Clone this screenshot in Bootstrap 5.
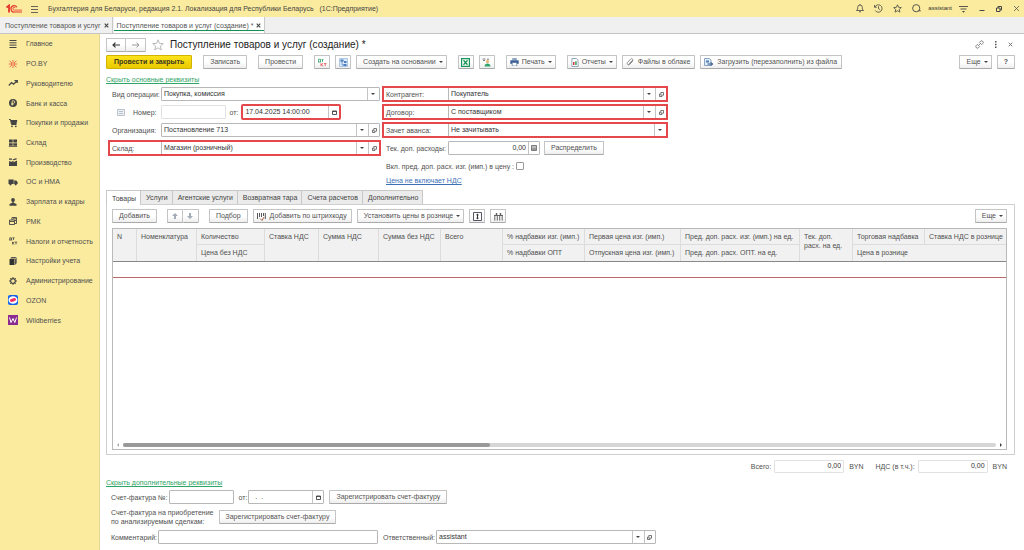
<!DOCTYPE html>
<html lang="ru">
<head>
<meta charset="utf-8">
<meta name="viewport" content="width=device-width, initial-scale=1">
<title>Поступление товаров и услуг (создание)</title>
<link href="https://cdn.jsdelivr.net/npm/bootstrap@5.3.0/dist/css/bootstrap.min.css" rel="stylesheet">
<style>
body{font:7px/9px "Liberation Sans",Arial,sans-serif;color:#505050;background:#fff}
svg{display:block;flex:none}
a{color:#2fa567}
.app-top{height:17px;background:#fbeb9e;padding:0 4px 0 6px;color:#444}
.app-top button,.page-head .tool,.open-tab button{border:0;background:none;padding:0;color:#555;line-height:1}
.app-name{margin-left:10px}
.top-tools,.win-tools{gap:10px}
.win-tools{gap:11px;margin-left:7px}
.user-name{font-size:6px;color:#333;margin-left:-3px}
.tab-strip{height:17px;background:#f0f0f0;border-bottom:1px solid #c4c4c4}
.open-tab{padding:0 3px 0 5px;gap:3px;border-right:1px solid #c8c8c8}
.open-tab a{color:#555;text-decoration:none}
.open-tab.current{background:#fff;margin-left:1px;padding:0 3px;box-shadow:inset 0 -2px 0 #fff,inset 0 -3px 0 #149050}
.side{flex:0 0 100px;background:#fbeb9e;border-right:1px solid #e2d794}
.side ul{display:grid;grid-auto-rows:1fr;height:296px;margin:0;padding:0;list-style:none}
.side a{display:flex;align-items:center;gap:8px;height:100%;padding-left:8px;color:#505050;text-decoration:none}
.page-body{padding:0 9px 4px 6px}
.page-head{height:21px;gap:6px}
.page-head h1{font-size:10px;line-height:12px;margin:0;font-weight:400;color:#222}
.head-tools{gap:7px;padding-right:2px}
.tbtn{display:inline-flex;align-items:center;justify-content:center;gap:4px;height:14px;padding:0 6px;border:1px solid #c4c4c4;border-bottom-color:#aaa;border-radius:1px;background:linear-gradient(#fff 50%,#eee);color:#505050;font-size:7px;line-height:8px;white-space:nowrap}
.tbtn.go{padding:0 7px;background:linear-gradient(#fde31b,#eac900);border-color:#d0b400;color:#3d3820;font-weight:700}
.tbtn.sq{width:16px;padding:0}
.tbtn.arrow{width:20px;padding:0}
.tbtn.ico{padding:0 4px 0 3px}
.tbtn.menu{padding-right:3px;gap:3px}
.tbtn.menu::after{content:"";border:2px solid transparent;border-top-color:#444;border-bottom:0}
.tools{gap:11px}.pair{display:flex;gap:5px}
.sheet .tools{gap:10px}
.joined{display:flex}.joined .tbtn+.tbtn{border-left:0}
.more-link{display:block;width:max-content;line-height:11px}
.more-link.top{margin-top:5px}
.more-link.price{color:#3b6fb6;margin-left:3px}
.head-form{gap:3px;padding-left:3px}
.col-left{flex:0 1 271px}.col-right{flex:0 1 284px}
.frow{display:flex;align-items:center;height:18px}
.frow>.bar{display:flex;align-items:center;flex:1;height:14px}
.lab{flex:none;white-space:nowrap}
.col-left .lab.w{width:52px;padding-left:3px}
.col-right .lab.w{width:65px;padding-left:3px}
.lab.in{padding-left:3px}
.fld{display:flex;flex:1 1 auto;min-width:0;height:14px;border:1px solid #b8b8b8;border-radius:1px;background:#fff}
.fld.pale{border-color:#e2e2e2}
.fld.w-num{flex:0 1 65px}
.fld.w-day{flex:0 1 76px}
.fld.w-time{flex:0 1 98px}
.fld.w-sum{flex:0 1 92px}
.fld.w-note{flex:0 1 220px}
.fld input,.fld select{flex:1 1 0;min-width:0;width:0;height:12px;border:0;border-radius:0;padding:0 2px;background:transparent;color:#333;font-size:7px;line-height:12px;outline:0}
.fld select{appearance:none;background:url("data:image/svg+xml,%3Csvg xmlns='http://www.w3.org/2000/svg' viewBox='0 0 4 2'%3E%3Cpath d='M0 0h4L2 2z' fill='%23444'/%3E%3C/svg%3E") right 4px center/4px 2px no-repeat,linear-gradient(#c4c4c4,#c4c4c4) right 11px top/1px 12px no-repeat}
.fld button{display:flex;align-items:center;justify-content:center;width:11px;padding:0;border:0;border-left:1px solid #c4c4c4;background:none;color:#444}
.marked{outline:2px solid #e5484a;outline-offset:-1px}
.tick{appearance:none;width:8px;height:8px;margin:0 0 0 2px;border:1px solid #999;border-radius:1px;background:#fff}
.sheet-tabs{gap:0;border:0}
.sheet-tabs button{height:14px;padding:0 4px 0 5px;border:1px solid #c8c8c8;border-bottom:0;border-left:0;border-radius:0;background:#ebebeb;color:#444;font-size:7px;line-height:13px;white-space:nowrap}
.sheet-tabs li:first-child button{height:15px;margin-bottom:-1px;border-left:1px solid #c8c8c8;background:#fff;position:relative}
.sheet{border:1px solid #cfcfcf;padding:4px 7px 4px 5px}
.grid-box{border:1px solid #b9b9b9;margin-top:5px}
.goods{width:100%;table-layout:fixed;border-collapse:separate;border-spacing:0}
.goods th{height:16px;padding:3px 3px 0 4px;font-weight:400;line-height:9px;vertical-align:top;background:#f1f1f1;border:0 solid #dcdcdc;border-right-width:1px;white-space:nowrap;overflow:hidden}
.goods th:last-child{border-right:0}
.goods thead tr:first-child th:not([rowspan]){border-bottom-width:1px}
.goods td{height:17px;padding:0;border-top:1px solid #888;border-bottom:1px solid #b9696a}
.hscroll{height:8px;gap:4px;padding:0 4px}
.hscroll i{border:2px solid transparent;width:0;height:0}
.hscroll .lt{border-right-color:#aaa;border-left:0}.hscroll .rt{border-left-color:#444;border-right:0}
.track{height:4px;border-radius:2px;background:#d6d6d6}
.thumb{width:42%;height:4px;border-radius:2px;background:#999}
.sums{height:22px;padding-right:8px;gap:5px}
.sums .lab+.fld{margin-left:-2px}
.sums .lab.next{margin-left:7px}
.sums .fld{flex:0 0 70px;height:13px}
.sums input{text-align:right;height:11px}
.extra{display:flex;flex-direction:column;gap:2px;padding-left:5px}
.extra .frow{gap:5px}
.extra .lab+.fld{margin-left:-4px}
</style>
</head>
<body>
<div class="d-flex flex-column min-vh-100">
<header class="app-top d-flex align-items-center">
  <svg width="17" height="10" viewBox="0 0 17 10" fill="none" stroke="#e3362c"><path d="M0.500 3.500 3 1.500V8.500" stroke-width="1.800"/><path d="M10.900 3.200A3.200 3.200 0 1 0 8.500 8H16" stroke-width="1.200"/><path d="M9.600 4.200A1.400 1.400 0 1 0 8.500 6.100H16" stroke-width=".8"/></svg>
  <button type="button" class="ms-2" aria-label="Меню"><svg width="7" height="8" viewBox="0 0 7 8" stroke="#555" stroke-width=".9"><path d="M0 1.500h7M0 4.500h7M0 7.500h7"/></svg></button>
  <span class="app-name">Бухгалтерия для Беларуси, редакция 2.1. Локализация для Республики Беларусь &nbsp; (1С:Предприятие)</span>
  <div class="top-tools d-flex align-items-center ms-auto">
    <button type="button" aria-label="Уведомления"><svg width="8" height="9" viewBox="0 0 8 9" fill="none" stroke="#444" stroke-width=".8"><path d="M.5 6.500h7L6.300 5V3.300a2.300 2.300 0 0 0-4.600 0V5zM4 .2v1M3 7.800h2"/></svg></button>
    <button type="button" aria-label="История"><svg width="9" height="9" viewBox="0 0 9 9" fill="none" stroke="#444" stroke-width=".8"><path d="M1 3A3.700 3.700 0 1 1 1.200 6.400M.5 1v2.300h2.200M4.500 2.300v2.400l1.700 1"/></svg></button>
    <button type="button" aria-label="Избранное"><svg width="9" height="9" viewBox="0 0 9 9" fill="none" stroke="#444" stroke-width=".8"><path d="M4.500.8l1.100 2.500 2.700.3-2 1.800.6 2.700-2.400-1.400-2.400 1.400.6-2.700-2-1.800 2.700-.3z"/></svg></button>
    <button type="button" aria-label="Поиск"><svg width="9" height="9" viewBox="0 0 9 9" fill="none" stroke="#444" stroke-width=".9"><circle cx="4.200" cy="4.200" r="3.600"/><path d="M6.600 6.800H8.800"/></svg></button>
    <span class="user-name">assistant</span>
  </div>
  <div class="win-tools d-flex align-items-center">
    <button type="button" aria-label="Настройки"><svg width="9" height="8" viewBox="0 0 9 8"><path d="M0 1.500h9M1.500 4h6" stroke="#444" stroke-width=".9"/><path d="M3 6h3L4.500 7.800z" fill="#444"/></svg></button>
    <button type="button" aria-label="Свернуть"><svg width="6" height="7" viewBox="0 0 6 7" stroke="#444"><path d="M.5 5.500h5"/></svg></button>
    <button type="button" aria-label="Восстановить"><svg width="6" height="6" viewBox="0 0 6 6" fill="none" stroke="#444"><path d="M.5 2h3.500v3.500H.500zM2 2V.5h3.500V4H4"/></svg></button>
    <button type="button" aria-label="Закрыть"><svg width="7" height="7" viewBox="0 0 7 7" stroke="#555" stroke-width=".8"><path d="M1 1l5 5M6 1 1 6"/></svg></button>
  </div>
</header>
<nav class="tab-strip d-flex" aria-label="Открытые окна">
  <div class="open-tab d-flex align-items-center"><a href="#">Поступление товаров и услуг</a><button type="button" aria-label="Закрыть вкладку"><svg width="5" height="5" viewBox="0 0 5 5" stroke="#444" stroke-width="1.100"><path d="M.7.7l3.600 3.600M4.300.7.7 4.300"/></svg></button></div>
  <div class="open-tab current d-flex align-items-center"><a href="#">Поступление товаров и услуг (создание) *</a><button type="button" aria-label="Закрыть вкладку"><svg width="5" height="5" viewBox="0 0 5 5" stroke="#444" stroke-width="1.100"><path d="M.7.7l3.600 3.600M4.300.7.7 4.300"/></svg></button></div>
</nav>
<div class="d-flex flex-grow-1">
<nav class="side" aria-label="Разделы"><ul>
  <li><a href="#"><svg width="10" height="10" viewBox="0 0 10 10" stroke="#444"><path d="M1.500 1.500h7M1.500 3.800h7M1.500 6.100h7M1.500 8.500h7"/></svg>Главное</a></li>
  <li><a href="#"><svg width="10" height="10" viewBox="0 0 10 10" fill="none" stroke="#e5503c" stroke-width=".8"><path d="M5 1v8M.8 5h2M7.200 5h2M1.500 2 3.500 3.300v3.400L1.500 8M8.500 2 6.500 3.300v3.400L8.500 8"/></svg>PO.BY</a></li>
  <li><a href="#"><svg width="10" height="10" viewBox="0 0 10 10" fill="none" stroke="#444" stroke-width="1.200"><path d="M.8 7.500 3.500 4.500l2 1.800L9 3M6.500 2.600H9.300V5"/></svg>Руководителю</a></li>
  <li><a href="#"><svg width="10" height="10" viewBox="0 0 10 10"><circle cx="5" cy="5" r="4" fill="#444"/><path d="M4.200 7.500V2.800h1.300a1.200 1.200 0 0 1 0 2.500H3.200M3.200 6.400h2.300" fill="none" stroke="#fbeb9e" stroke-width=".8"/></svg>Банк и касса</a></li>
  <li><a href="#"><svg width="10" height="10" viewBox="0 0 10 10"><path d="M1 1.500h1.500L3.500 6.500h5" fill="none" stroke="#444"/><path d="M2.500 2h6.800L8.500 6h-5z" fill="#444"/><circle cx="4" cy="8.300" r=".9" fill="#444"/><circle cx="7.800" cy="8.300" r=".9" fill="#444"/></svg>Покупки и продажи</a></li>
  <li><a href="#"><svg width="10" height="10" viewBox="0 0 10 10" fill="#444"><path d="M1 1.500h3.700v3H1zM5.300 1.500H9v3H5.300zM1 5.200h3.700v2.500H1zM5.300 5.200H9v2.500H5.300zM.8 8.200h8.400v.8H.8z"/></svg>Склад</a></li>
  <li><a href="#"><svg width="10" height="10" viewBox="0 0 10 10" fill="#444"><path d="M1 9V4.500l1.500-.8v1.500L5.500 3.700v1.500L9 3.500V9zM1 1.500h3v1.200H1zM4.500 2.500 8.500 1v1.500L5.500 3.300z"/></svg>Производство</a></li>
  <li><a href="#"><svg width="10" height="10" viewBox="0 0 10 10" fill="#444"><path d="M.5 2.500h5.200V7H.5zM6.200 3.500h2L9.600 5v2H6.200z"/><circle cx="2.500" cy="7.300" r="1.100"/><circle cx="7.700" cy="7.300" r="1.100"/></svg>ОС и НМА</a></li>
  <li><a href="#"><svg width="10" height="10" viewBox="0 0 10 10" fill="#444"><circle cx="5" cy="3" r="1.900"/><path d="M4.300 4.500h1.400v1.200L8.500 7v1.800h-7V7l2.800-1.300z"/></svg>Зарплата и кадры</a></li>
  <li><a href="#"><svg width="10" height="10" viewBox="0 0 10 10" fill="none" stroke="#444"><path d="M1.500 4h5v4.500h-5zM2 5.500h4M4 4V1.500h4.500v6H6.500M5 2.800h3M8 4.500H7" stroke-width=".9"/></svg>РМК</a></li>
  <li><a href="#"><svg width="10" height="10" viewBox="0 0 10 10" fill="none" stroke="#444" stroke-width=".8"><path d="M1 4h3.200M1.800 4V1.800h1.700V4M4.500 1.800h2M5.500 1.800V4M4.500 5.800v2.600M6.300 5.800 4.700 7.200 6.300 8.400M6.800 6.200h2.400M8 6.200v2.200"/></svg>Налоги и отчетность</a></li>
  <li><a href="#"><svg width="10" height="10" viewBox="0 0 10 10"><path d="M1.500 3h5v6h-5z" fill="#333"/><path d="M2 2.500 3.500 1H8.500L7 2.500zM7 3.200 8.700 1.600V7.300L7 8.900z" fill="#555"/></svg>Настройки учета</a></li>
  <li><a href="#"><svg width="10" height="10" viewBox="0 0 10 10" fill="none" stroke="#444"><circle cx="5" cy="5" r="2.300" stroke-width="1.200"/><path d="M5 1v1.500M5 7.500V9M1 5h1.500M7.500 5H9M2.200 2.200l1 1M6.800 6.800l1 1M7.800 2.200l-1 1M3.200 6.800l-1 1"/></svg>Администрирование</a></li>
  <li><a href="#"><svg width="10" height="10" viewBox="0 0 10 10"><rect width="10" height="10" rx="2" fill="#1261e8"/><ellipse cx="5" cy="5" rx="4.500" ry="3.800" fill="#fff"/><ellipse cx="5" cy="5" rx="3.100" ry="1.700" transform="rotate(-18 5 5)" fill="#f32f63"/></svg>OZON</a></li>
  <li><a href="#"><svg width="10" height="10" viewBox="0 0 10 10"><rect width="10" height="10" fill="#8b2b91"/><path d="M1.500 2.500 3 7.500l2-4 1.800 4L8.500 2.500" fill="none" stroke="#fff"/></svg>Wildberries</a></li>
</ul></nav>

<main class="page-body d-flex flex-column flex-grow-1 overflow-hidden">
  <div class="page-head d-flex align-items-center">
    <div class="joined"><button type="button" class="tbtn arrow" aria-label="Назад"><svg width="8" height="6" viewBox="0 0 8 6" fill="none" stroke="#333" stroke-width="1.200"><path d="M8 3H1M3.500.6 1 3l2.500 2.400"/></svg></button><button type="button" class="tbtn arrow" aria-label="Вперед"><svg width="8" height="6" viewBox="0 0 8 6" fill="none" stroke="#999"><path d="M0 3h7M4.500.6 7 3 4.500 5.400"/></svg></button></div>
    <button type="button" class="tool" aria-label="В избранное"><svg width="12" height="12" viewBox="0 0 12 12" fill="none" stroke="#aaa" stroke-width=".8"><path d="M6 .8l1.400 3.600 3.900.2-3 2.500 1 3.800L6 8.800 2.700 10.900l1-3.800-3-2.500 3.900-.2z"/></svg></button>
    <h1>Поступление товаров и услуг (создание) *</h1>
    <div class="head-tools d-flex align-items-center ms-auto">
      <button type="button" class="tool" aria-label="Ссылка"><svg width="9" height="9" viewBox="0 0 9 9" fill="none" stroke="#666" stroke-width=".8"><path d="M3 6 6 3M4 2.800 5.500 1.300a1.500 1.500 0 0 1 2.200 2.200L6.200 5M5 6.200 3.500 7.700A1.500 1.500 0 0 1 1.300 5.500L2.800 4"/></svg></button>
      <button type="button" class="tool px-1" aria-label="Действия"><svg width="2" height="7" viewBox="0 0 2 7" fill="#555"><path d="M0 0h1.500v1.500H0zM0 2.700h1.500v1.500H0zM0 5.400h1.500V7H0z"/></svg></button>
      <button type="button" class="tool" aria-label="Закрыть"><svg width="5" height="5" viewBox="0 0 5 5" stroke="#666" stroke-width=".9"><path d="M.7.7l3.600 3.600M4.300.7.7 4.300"/></svg></button>
    </div>
  </div>
  <div class="tools d-flex align-items-center">
    <button type="button" class="tbtn go">Провести и закрыть</button>
    <button type="button" class="tbtn">Записать</button>
    <button type="button" class="tbtn">Провести</button>
    <div class="pair">
      <button type="button" class="tbtn sq" aria-label="Дт Кт"><svg width="10" height="9" viewBox="0 0 10 9" fill="none" stroke-width=".8"><path d="M1 4h3M1.500 4V1.200h2V4M4.500 1.600h2M5.500 1.600V4" stroke="#2fa06a"/><path d="M4 5.200v3M6.200 5.200 4.200 6.700l2 1.500M7 5.600h2.500M8.200 5.600v2.600" stroke="#e04b4b"/></svg></button>
      <button type="button" class="tbtn sq" aria-label="Структура"><svg width="9" height="9" viewBox="0 0 9 9"><path d="M.5.5h8v8h-8z" fill="#dce9f7" stroke="#9bbbe0" stroke-width=".8"/><path d="M1.500 1.500h3v2.200h-3zM5 3h2.500v2H5zM4.500 6h3v2h-3z" fill="#4b7fc0"/><path d="M3 4v3h2" fill="none" stroke="#4b7fc0" stroke-width=".7"/></svg></button>
      <button type="button" class="tbtn menu">Создать на основании</button>
    </div>
    <div class="pair">
      <button type="button" class="tbtn sq" aria-label="Excel"><svg width="9" height="9" viewBox="0 0 9 9"><path d="M.6.6h7.800v7.800H.600z" fill="#fff" stroke="#179456" stroke-width="1.200"/><path d="M2.500 2.200l4 4.600M6.500 2.200l-4 4.600" stroke="#179456" stroke-width="1.300"/></svg></button>
      <button type="button" class="tbtn sq" aria-label="Контрагент"><svg width="9" height="9" viewBox="0 0 9 9"><circle cx="5.500" cy="3.500" r="1.600" fill="#e8b36a"/><path d="M2.500 8.500c0-4 6-4 6 0z" fill="#31a36c"/><path d="M.5 1h3M1 2.500h2M5 1.200h2" stroke="#555" stroke-width=".8"/></svg></button>
    </div>
    <button type="button" class="tbtn ico menu"><svg width="9" height="8" viewBox="0 0 9 8"><path d="M2.200 0h4.600v2.500H2.200z" fill="#8fa5c4"/><path d="M.3 2.300h8.400v3.500H.3z" fill="#3d5f94"/><path d="M2.200 4.500h4.600V8H2.200z" fill="#fff" stroke="#3d5f94" stroke-width=".6"/></svg>Печать</button>
    <div class="pair">
      <button type="button" class="tbtn ico menu"><svg width="8" height="9" viewBox="0 0 8 9"><path d="M.9.5h4.700l1.500 1.500v6.500H.9z" fill="#fff" stroke="#7d93ad" stroke-width=".8"/><path d="M2 4h1.500v3H2z" fill="#dd3c3c"/><path d="M4.200 3.300h1.500V7H4.200z" fill="#3a9d62"/></svg>Отчеты</button>
      <button type="button" class="tbtn ico"><svg width="8" height="8" viewBox="0 0 8 8" fill="none" stroke="#777" stroke-width=".8"><path d="M6.800 3 3.600 6.500a1.500 1.500 0 0 1-2.200-2L4.800 1a1 1 0 0 1 1.600 1.400L3.300 5.600M2.500 6.800 7.200 2"/></svg>Файлы в облаке</button>
      <button type="button" class="tbtn ico"><svg width="9" height="9" viewBox="0 0 9 9"><path d="M.5.5h5L7 2v5.500H.5z" fill="#e3eefa" stroke="#6f8fb5" stroke-width=".8"/><path d="M2 2.500h3v2H2z" fill="#4b7fc0"/><path d="M3.500 6h5M6.800 4.200 8.600 6 6.800 7.800" fill="none" stroke="#24497c"/></svg>Загрузить (перезаполнить) из файла</button>
    </div>
    <div class="pair ms-auto">
      <button type="button" class="tbtn menu">Еще</button>
      <button type="button" class="tbtn fw-bold">?</button>
    </div>
  </div>
  <a href="#" class="more-link top">Скрыть основные реквизиты</a>
  <form class="head-form d-flex">
    <div class="col-left">
      <div class="frow"><label class="lab w" for="op">Вид операции:</label><div class="fld"><select id="op"><option>Покупка, комиссия</option></select></div></div>
      <div class="frow">
        <svg class="ms-2" width="8" height="7" viewBox="0 0 8 7"><path d="M.5.5h7v6h-7z" fill="#eef1f5" stroke="#aab2bd" stroke-width=".8"/><path d="M2 2.500h4M2 4.500h4" stroke="#aab2bd" stroke-width=".8"/></svg>
        <label class="lab ms-2" for="num">Номер:</label><div class="fld pale w-num ms-1"><input id="num"></div>
        <label class="lab ms-1" for="dt">от:</label><div class="fld marked w-time ms-1"><input id="dt" value="17.04.2025 14:00:00"><button type="button" aria-label="Календарь"><svg width="5" height="5" viewBox="0 0 5 5"><path d="M.5 1h4v3.500h-4zM.5 1.500h4" fill="none" stroke="#444" stroke-width=".9"/></svg></button></div>
      </div>
      <div class="frow"><label class="lab w" for="org">Организация:</label><div class="fld"><select id="org"><option>Постановление 713</option></select><button type="button" aria-label="Открыть"><svg width="5" height="5" viewBox="0 0 5 5" fill="none" stroke="#555" stroke-width=".8"><path d="M1.800.5h2.700v2.700H1.800zM1.200 2H.5v2.500H3V3.800"/></svg></button></div></div>
      <div class="frow"><div class="bar marked"><label class="lab w" for="wh">Склад:</label><div class="fld"><select id="wh"><option>Магазин (розничный)</option></select><button type="button" aria-label="Открыть"><svg width="5" height="5" viewBox="0 0 5 5" fill="none" stroke="#555" stroke-width=".8"><path d="M1.800.5h2.700v2.700H1.800zM1.200 2H.5v2.500H3V3.800"/></svg></button></div></div></div>
    </div>
    <div class="col-right">
      <div class="frow"><div class="bar marked"><label class="lab w" for="ka">Контрагент:</label><div class="fld"><select id="ka"><option>Покупатель</option></select><button type="button" aria-label="Открыть"><svg width="5" height="5" viewBox="0 0 5 5" fill="none" stroke="#555" stroke-width=".8"><path d="M1.800.5h2.700v2.700H1.800zM1.200 2H.5v2.500H3V3.800"/></svg></button></div></div></div>
      <div class="frow"><div class="bar marked"><label class="lab w" for="dog">Договор:</label><div class="fld"><select id="dog"><option>С поставщиком</option></select><button type="button" aria-label="Открыть"><svg width="5" height="5" viewBox="0 0 5 5" fill="none" stroke="#555" stroke-width=".8"><path d="M1.800.5h2.700v2.700H1.800zM1.200 2H.5v2.500H3V3.800"/></svg></button></div></div></div>
      <div class="frow"><div class="bar marked"><label class="lab w" for="av">Зачет аванса:</label><div class="fld"><select id="av"><option>Не зачитывать</option></select></div></div></div>
      <div class="frow"><label class="lab w" for="exp">Тек. доп. расходы:</label><div class="fld w-sum"><input id="exp" class="text-end" value="0,00"><button type="button" aria-label="Калькулятор"><svg width="6" height="6" viewBox="0 0 6 6"><path d="M.5.5h5v5h-5z" fill="#999" stroke="#666" stroke-width=".8"/><path d="M1 2h4" stroke="#fff" stroke-width=".7"/></svg></button></div><button type="button" class="tbtn ms-1">Распределить</button></div>
      <div class="frow"><label class="lab in" for="inc">Вкл. пред. доп. расх. изг. (имп.) в цену :</label><input type="checkbox" class="tick" id="inc"></div>
      <a href="#" class="more-link price">Цена не включает НДС</a>
    </div>
  </form>

  <ul class="nav nav-tabs sheet-tabs mt-1" role="tablist">
    <li><button type="button" role="tab" aria-selected="true">Товары</button></li><li><button type="button" role="tab">Услуги</button></li><li><button type="button" role="tab">Агентские услуги</button></li><li><button type="button" role="tab">Возвратная тара</button></li><li><button type="button" role="tab">Счета расчетов</button></li><li><button type="button" role="tab">Дополнительно</button></li>
  </ul>
  <section class="sheet d-flex flex-column flex-grow-1">
    <div class="tools d-flex align-items-center">
      <button type="button" class="tbtn">Добавить</button>
      <div class="joined"><button type="button" class="tbtn sq" aria-label="Вверх"><svg width="6" height="6" viewBox="0 0 6 6" fill="#a3acb8"><path d="M3 0l3 3H4v3H2V3H0z"/></svg></button><button type="button" class="tbtn sq" aria-label="Вниз"><svg width="6" height="6" viewBox="0 0 6 6" fill="#a3acb8"><path d="M3 6l3-3H4V0H2v3H0z"/></svg></button></div>
      <div class="pair">
        <button type="button" class="tbtn">Подбор</button>
        <button type="button" class="tbtn ico"><svg width="9" height="9" viewBox="0 0 9 9" fill="none" stroke="#444"><path d="M.5 1v6M2.500 1v4M4.500 1v4M6.500 1v3M8.300 1v6" stroke-width=".9"/><path d="M3 6.500 5 8.500 7 5" stroke="#a0522d" stroke-width=".9"/></svg>Добавить по штрихкоду</button>
        <button type="button" class="tbtn menu">Установить цены в рознице</button>
        <button type="button" class="tbtn sq" aria-label="Высота строк"><svg width="9" height="9" viewBox="0 0 9 9"><path d="M.5.5h8v8h-8z" fill="#fff" stroke="#445" stroke-width=".9"/><path d="M4.500 1.500 6 3.300H3zM4.500 7.500 3 5.700h3zM4 3h1v3H4z" fill="#333"/></svg></button>
        <button type="button" class="tbtn sq" aria-label="Колонки"><svg width="9" height="9" viewBox="0 0 9 9" fill="none" stroke="#555" stroke-width=".9"><path d="M0 3.500h9M.8 3.500v5M3.300 3.500v5M5.700 3.500v5M8.200 3.500v5M1.500 2h2M5.500 2h2M2.500 1v2M6.500 1v2"/></svg></button>
      </div>
      <button type="button" class="tbtn menu ms-auto">Еще</button>
    </div>
    <div class="grid-box d-flex flex-column flex-grow-1">
      <table class="goods">
        <colgroup><col style="width:24px"><col style="width:60px"><col style="width:68px"><col style="width:54px"><col style="width:60px"><col style="width:62px"><col style="width:62px"><col style="width:82px"><col style="width:96px"><col style="width:119px"><col style="width:53px"><col style="width:72px"><col></colgroup>
        <thead>
          <tr><th rowspan="2">N</th><th rowspan="2">Номенклатура</th><th>Количество</th><th rowspan="2">Ставка НДС</th><th rowspan="2">Сумма НДС</th><th rowspan="2">Сумма без НДС</th><th rowspan="2">Всего</th><th>% надбавки изг. (имп.)</th><th>Первая цена изг. (имп.)</th><th>Пред. доп. расх. изг. (имп.) на ед.</th><th rowspan="2">Тек. доп.<br>расх. на ед.</th><th>Торговая надбавка</th><th>Ставка НДС в рознице</th></tr>
          <tr><th>Цена без НДС</th><th>% надбавки ОПТ</th><th>Отпускная цена изг. (имп.)</th><th>Пред. доп. расх. ОПТ. на ед.</th><th colspan="2">Цена в рознице</th></tr>
        </thead>
        <tbody><tr><td colspan="13"></td></tr></tbody>
      </table>
      <div class="hscroll d-flex align-items-center mt-auto"><i class="lt"></i><div class="track flex-grow-1"><div class="thumb"></div></div><i class="rt"></i></div>
    </div>
  </section>

  <div class="sums d-flex align-items-center justify-content-end">
    <label class="lab" for="tot">Всего:</label><div class="fld pale"><input id="tot" value="0,00"></div><span>BYN</span>
    <label class="lab next" for="vat">НДС (в т.ч.):</label><div class="fld pale"><input id="vat" value="0,00"></div><span>BYN</span>
  </div>
  <a href="#" class="more-link">Скрыть дополнительные реквизиты</a>
  <form class="extra">
    <div class="frow"><label class="lab" for="sf">Счет-фактура №:</label><div class="fld w-num"><input id="sf"></div><label class="lab" for="sd">от:</label><div class="fld w-day"><input id="sd" value="  .  ."><button type="button" aria-label="Календарь"><svg width="5" height="5" viewBox="0 0 5 5"><path d="M.5 1h4v3.500h-4zM.5 1.500h4" fill="none" stroke="#444" stroke-width=".9"/></svg></button></div><button type="button" class="tbtn">Зарегистрировать счет-фактуру</button></div>
    <div class="frow"><span class="lab">Счет-фактура на приобретение<br>по анализируемым сделкам:</span><button type="button" class="tbtn">Зарегистрировать счет-фактуру</button></div>
    <div class="frow"><label class="lab" for="cm">Комментарий:</label><div class="fld w-note"><input id="cm"></div><label class="lab" for="rs">Ответственный:</label><div class="fld w-note"><select id="rs"><option>assistant</option></select><button type="button" aria-label="Открыть"><svg width="5" height="5" viewBox="0 0 5 5" fill="none" stroke="#555" stroke-width=".8"><path d="M1.800.5h2.700v2.700H1.800zM1.200 2H.5v2.500H3V3.800"/></svg></button></div></div>
  </form>
</main>
</div>
</div>
<script src="https://cdn.jsdelivr.net/npm/bootstrap@5.3.0/dist/js/bootstrap.bundle.min.js"></script>
</body>
</html>
